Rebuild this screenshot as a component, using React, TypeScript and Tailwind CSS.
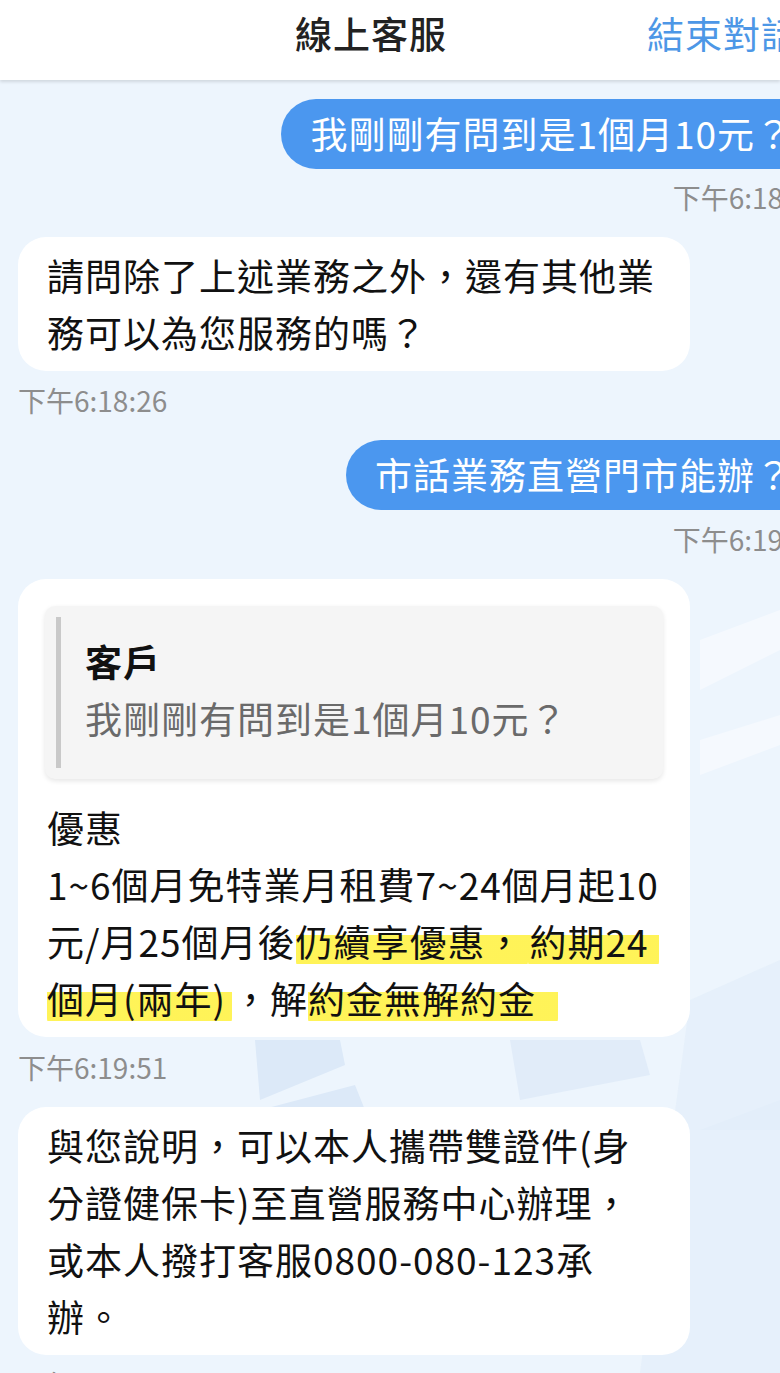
const font = 'font-["Noto_Sans_CJK_TC","Noto_Sans_CJK_SC",sans-serif]'

function Stamp({ children, right }: { children: string; right?: boolean }) {
  return (
    <div
      className={`text-[28px] leading-[32px] text-[#8d8d8d] whitespace-nowrap ${right ? 'text-right' : ''}`}
    >
      {children}
    </div>
  )
}

function Mine({ text }: { text: string }) {
  return (
    <div className="flex justify-end">
      <div className="flex h-[70px] items-center rounded-full bg-[#4b97ef] pl-[29px] pr-[29px] text-[37px] tracking-[1px] text-white whitespace-nowrap">
        {text}
      </div>
    </div>
  )
}

function Agent({ children }: { children: React.ReactNode }) {
  return (
    <div className="w-[672px] rounded-[28px] bg-white px-[29px] py-[10px] text-[37px] leading-[57px] tracking-[1px] text-[#111] whitespace-nowrap">
      {children}
    </div>
  )
}

function Mark({ children, className = '' }: { children: React.ReactNode; className?: string }) {
  return (
    <span
      className={`rounded-[6px] bg-[linear-gradient(to_bottom,transparent_38%,rgba(255,242,70,0.9)_38%,rgba(255,242,70,0.9)_92%,transparent_92%)] ${className}`}
    >
      {children}
    </span>
  )
}

export default function App() {
  return (
    <div className={`relative h-[1373px] w-[780px] overflow-hidden bg-[#edf5fd] ${font}`}>
      {/* faint backdrop shapes */}
      <svg className="absolute inset-0 h-full w-full" viewBox="0 0 780 1373" preserveAspectRatio="none">
        <polygon points="700,640 780,610 780,650 700,690" fill="#f5f9fe" />
        <polygon points="700,740 780,715 780,745 700,775" fill="#f5f9fe" />
        <polygon points="690,1000 780,960 780,1373 640,1373" fill="#e3eefa" opacity="0.7" />
        <polygon points="255,1040 340,1040 345,1065 260,1100" fill="#dce9f8" />
        <polygon points="510,1040 640,1040 650,1075 520,1100" fill="#e1ecf9" />
        <polygon points="260,1110 355,1085 365,1110" fill="#dce9f8" />
        <polygon points="700,1130 780,1100 780,1130" fill="#e3eefa" />
      </svg>

      <div className="relative w-[836px]">
        {/* header */}
        <div className="relative z-10 h-[80px] w-[780px] bg-white shadow-[0_2px_3px_rgba(0,0,0,0.12)]">
          <div className="flex items-start pl-[295px] pt-[13px] text-[37px] leading-[40px] tracking-[1px] whitespace-nowrap">
            <span className="font-medium text-[#222]">線上客服</span>
            <span className="ml-[200px] text-[#4d97e6]">結束對話</span>
          </div>
        </div>

        <div className="flex flex-col gap-[24px] pl-[18px] pr-[14px] pt-[19px]">
          <div className="flex flex-col gap-[12px]">
            <Mine text="我剛剛有問到是1個月10元？" />
            <Stamp right>下午6:18:20</Stamp>
          </div>

          <div className="flex flex-col gap-[13px]">
            <Agent>
              請問除了上述業務之外，還有其他業
              <br />
              務可以為您服務的嗎？
            </Agent>
            <Stamp>下午6:18:26</Stamp>
          </div>

          <div className="flex flex-col gap-[13px]">
            <Mine text="市話業務直營門市能辦？" />
            <Stamp right>下午6:19:05</Stamp>
          </div>

          <div className="flex flex-col gap-[14px]">
            <div className="w-[672px] rounded-[28px] bg-white px-[27px] pt-[27px] pb-[10px] text-[37px] leading-[57px] tracking-[1px] text-[#111] whitespace-nowrap">
              <div className="flex rounded-[10px] bg-[#f5f5f5] p-[11px] shadow-[0_2px_5px_rgba(0,0,0,0.1)]">
                <div className="w-[5px] self-stretch bg-[#c9c9c9]" />
                <div className="pl-[24px] pt-[16px] pb-[21px]">
                  <div className="font-bold text-[#111]">客戶</div>
                  <div className="text-[#6a6a6a]">我剛剛有問到是1個月10元？</div>
                </div>
              </div>
              <div className="mt-[20px] pl-[2px]">
                優惠
                <br />
                1~6個月免特業月租費7~24個月起10
                <br />
                元/月25個月後<Mark className="pr-[4px]">仍續享優惠，</Mark>
                <Mark className="pl-[2px] pr-[10px]">約期24</Mark>
                <br />
                <Mark className="pr-[6px]">個月(兩年)</Mark>，解<Mark className="pr-[22px]">約金無解約金</Mark>
              </div>
            </div>
            <Stamp>下午6:19:51</Stamp>
          </div>

          <div className="flex flex-col gap-[13px]">
            <Agent>
              與您說明，可以本人攜帶雙證件(身
              <br />
              分證健保卡)至直營服務中心辦理，
              <br />
              或本人撥打客服0800-080-123承
              <br />
              辦。
            </Agent>
            <Stamp>下午6:20:10</Stamp>
          </div>
        </div>
      </div>
    </div>
  )
}
